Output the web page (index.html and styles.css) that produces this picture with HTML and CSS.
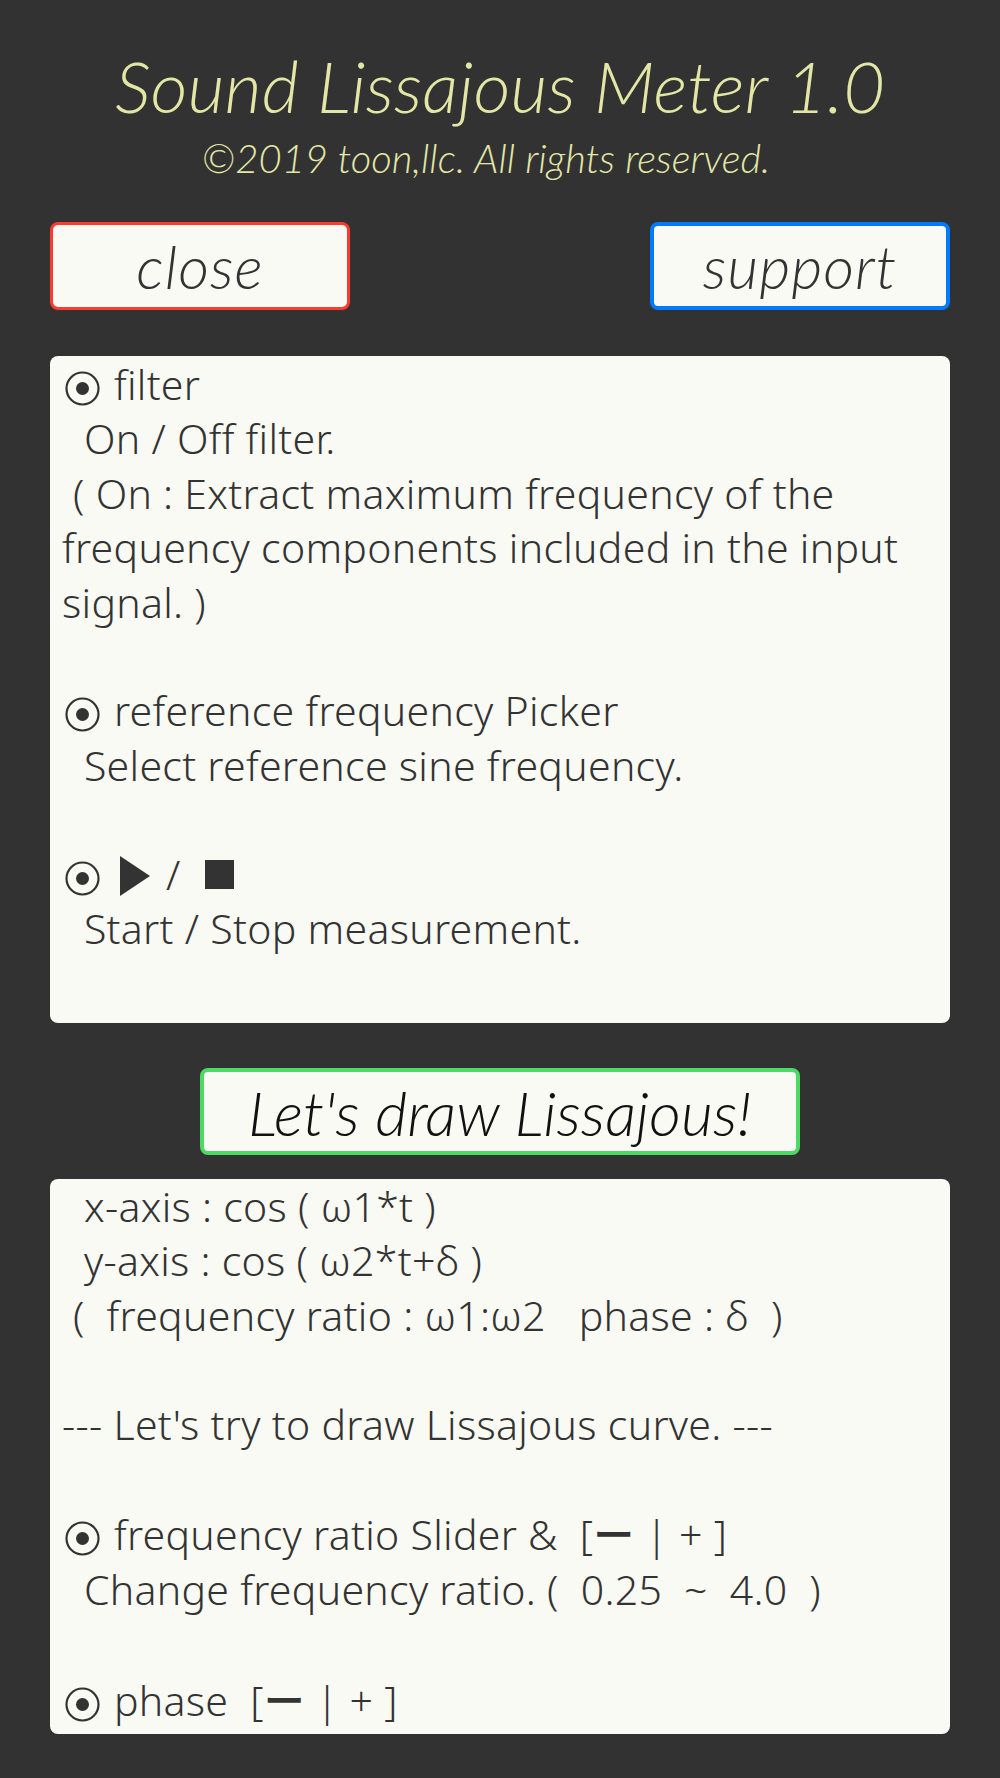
FILE: index.html
```html
<!DOCTYPE html>
<html lang="en">
<head>
    <meta charset="UTF-8">
    <meta name="viewport" content="width=device-width, initial-scale=1.0">
    <title>Sound Lissajous Meter 1.0</title>
    <link rel="stylesheet" href="styles.css">
</head>
<body>
    <header class="header">
        <h1 class="title">Sound Lissajous Meter 1.0</h1>
        <p class="copyright">©2019 toon,llc. All rights reserved.</p>
    </header>

    <div class="actions">
        <button class="btn btn-close">close</button>
        <button class="btn btn-support">support</button>
    </div>

    <div class="panel panel-help">
        <p class="line"><svg class="dot" viewBox="0 0 35 35"><circle cx="17.5" cy="17.5" r="16"/><circle class="dot-in" cx="17.5" cy="17.5" r="6.5"/></svg> filter</p>
        <p class="line">  On / Off filter.</p>
        <p class="line"> ( On : Extract maximum frequency of the frequency components included in the input signal. )</p>
        <p class="line">&nbsp;</p>
        <p class="line"><svg class="dot" viewBox="0 0 35 35"><circle cx="17.5" cy="17.5" r="16"/><circle class="dot-in" cx="17.5" cy="17.5" r="6.5"/></svg> reference frequency Picker</p>
        <p class="line">  Select reference sine frequency.</p>
        <p class="line">&nbsp;</p>
        <p class="line"><svg class="dot" viewBox="0 0 35 35"><circle cx="17.5" cy="17.5" r="16"/><circle class="dot-in" cx="17.5" cy="17.5" r="6.5"/></svg> <svg class="play" viewBox="0 0 30 40"><polygon points="0,0 30,20 0,40"/></svg> / <svg class="stop" viewBox="0 0 29 29"><rect width="29" height="29"/></svg></p>
        <p class="line">  Start / Stop measurement.</p>
        <p class="line">&nbsp;</p>
        <p class="line"><svg class="dot" viewBox="0 0 35 35"><circle cx="17.5" cy="17.5" r="16"/><circle class="dot-in" cx="17.5" cy="17.5" r="6.5"/></svg> Lissajous view</p>
        <p class="line">  Display Lissajous curve of input signal.</p>
    </div>

    <div class="center">
        <button class="btn btn-draw">Let's draw Lissajous!</button>
    </div>

    <div class="panel panel-draw">
        <p class="line">  x-axis : cos ( ω1*t )</p>
        <p class="line">  y-axis : cos ( ω2*t+δ )</p>
        <p class="line"> (  frequency ratio : ω1:ω2   phase : δ  )</p>
        <p class="line">&nbsp;</p>
        <p class="line">--- Let's try to draw Lissajous curve. ---</p>
        <p class="line">&nbsp;</p>
        <p class="line"><svg class="dot" viewBox="0 0 35 35"><circle cx="17.5" cy="17.5" r="16"/><circle class="dot-in" cx="17.5" cy="17.5" r="6.5"/></svg> frequency ratio Slider &amp;  [<span class="bar">ー</span> | + ]</p>
        <p class="line">  Change frequency ratio. (  0.25  ~  4.0  )</p>
        <p class="line">&nbsp;</p>
        <p class="line"><svg class="dot" viewBox="0 0 35 35"><circle cx="17.5" cy="17.5" r="16"/><circle class="dot-in" cx="17.5" cy="17.5" r="6.5"/></svg> phase  [<span class="bar">ー</span> | + ]</p>
        <p class="line">  Change phase. (  0  ~  2π  )</p>
    </div>
</body>
</html>
```

FILE: styles.css
```css
* {
    margin: 0;
    padding: 0;
    box-sizing: border-box;
}

body {
    background: #323232;
    font-family: "Noto Sans", "Open Sans", sans-serif;
    color: #333;
    height: 1778px;
    overflow: hidden;
}

.header {
    padding-top: 45px;
    text-align: center;
    color: #e2e7a5;
    font-family: Lato, "Open Sans", sans-serif;
    font-style: italic;
    font-weight: 300;
}

.title {
    font-size: 72px;
    line-height: 80px;
    font-weight: 300;
}

.copyright {
    margin-top: 10px;
    padding-right: 28px;
    font-size: 40px;
    line-height: 46px;
}

.actions {
    display: flex;
    justify-content: space-between;
    margin: 41px 50px 0;
}

.btn {
    display: flex;
    align-items: center;
    justify-content: center;
    background: #f9faf4;
    border-radius: 8px;
    font-family: Lato, "Open Sans", sans-serif;
    font-style: italic;
    font-weight: 300;
    color: #333;
    cursor: pointer;
}

.btn-close {
    width: 300px;
    height: 88px;
    border: 3px solid #ff3b30;
    font-size: 60px;
    letter-spacing: 1px;
}

.btn-support {
    width: 300px;
    height: 88px;
    border: 4px solid #007aff;
    font-size: 60px;
    letter-spacing: 1px;
}

.center {
    display: flex;
    justify-content: center;
    margin-top: 45px;
}

.btn-draw {
    width: 600px;
    height: 87px;
    border: 4px solid #4cd964;
    font-size: 62px;
    color: #111;
}

.panel {
    margin: 0 50px;
    background: #f9faf4;
    border-radius: 8px;
    padding: 1px 12px 0;
    overflow: hidden;
    font-size: 41px;
    font-weight: 300;
    letter-spacing: 0.3px;
    line-height: 54.4px;
}

.line {
    white-space: pre-wrap;
}

.panel-help {
    margin-top: 46px;
    height: 667px;
}

.panel-draw {
    margin-top: 24px;
    height: 555px;
    padding-top: 0;
}

.dot {
    width: 35px;
    height: 35px;
    vertical-align: -6px;
    margin: 0 3px 0 3px;
    fill: none;
    stroke: #333;
    stroke-width: 2.2;
}

.dot .dot-in {
    fill: #333;
    stroke: none;
}

.play {
    width: 30px;
    height: 40px;
    vertical-align: -6px;
    margin: 0 5px 0 6px;
    fill: #333;
}

.stop {
    width: 29px;
    height: 29px;
    vertical-align: 1px;
    margin-left: 14px;
    fill: #333;
}

.bar {
    font-family: "Noto Sans CJK JP", sans-serif;
    font-weight: 500;
}
```
